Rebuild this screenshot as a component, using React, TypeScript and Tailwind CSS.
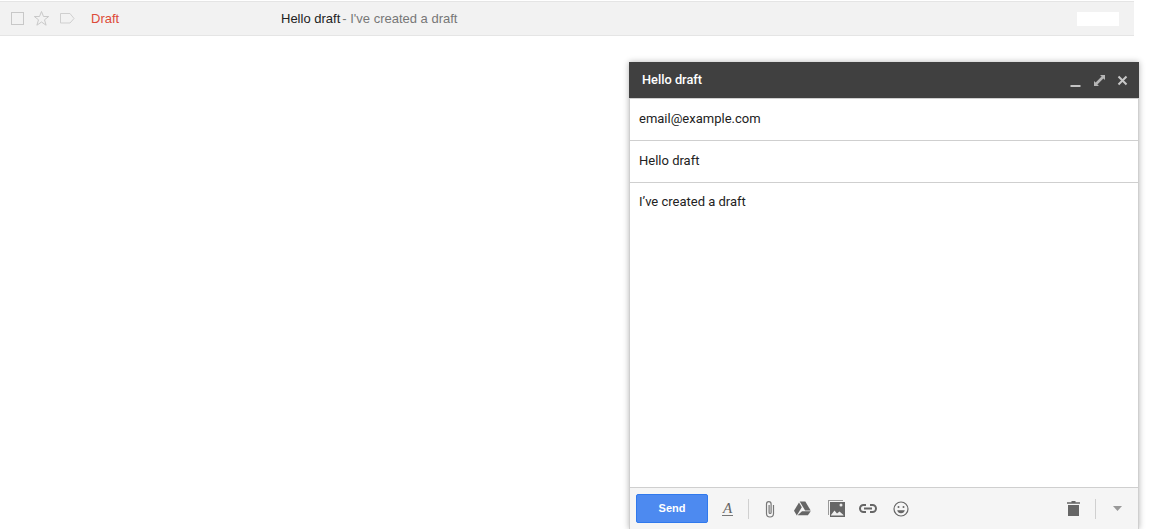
import React from 'react';

function App() {
  return (
    <div className="h-[529px] w-[1160px] overflow-hidden bg-white font-['Liberation_Sans',Arimo,sans-serif] text-[13px] text-[#222]">
      {/* Draft row */}
      <div className="mt-px flex h-[35px] w-[1134px] items-center border-y border-[#e5e5e5] bg-[#f2f2f2]">
        <div className="ml-[11px] h-[13px] w-[13px] border border-[#c8c8c8]" />
        <svg className="ml-[9px]" width="17" height="17" viewBox="0 0 17 17" fill="none" stroke="#c9c9c9" strokeWidth="1">
          <path d="M8.5 1.5l2 5h5.2l-4.2 3.3 1.6 5.4-4.6-3.2-4.6 3.2 1.6-5.4-4.2-3.3h5.2z" />
        </svg>
        <svg className="ml-[10px]" width="15" height="11" viewBox="0 0 15 11" fill="none" stroke="#cfcfcf" strokeWidth="1">
          <path d="M.5.5h9.5l4 5-4 4.5H.5z" />
        </svg>
        <span className="ml-[16px] w-[190px] text-[#dd4b39]">Draft</span>
        <span className="text-[#222]">Hello draft</span>
        <span className="ml-[2px] text-[#777]">- I've created a draft</span>
        <div className="ml-[620px] h-[14px] w-[42px] bg-white" />
      </div>

      {/* Compose window */}
      <div className="ml-[629px] mt-[26px] flex h-[467px] w-[510px] flex-col bg-white shadow-[0_0_6px_rgba(0,0,0,0.3)]">
        <div className="flex h-[36px] shrink-0 items-center bg-[#404040] pl-[13px] pr-[11px] text-white">
          <span className="flex-1 font-['Roboto',sans-serif] text-[12.8px] font-medium">Hello draft</span>
          <svg width="11" height="12" viewBox="0 0 11 12" fill="#c4c4c4" className="mt-[3px]">
            <rect x="0.5" y="9" width="10" height="2" />
          </svg>
          <svg width="11" height="11" viewBox="0 0 11 11" fill="#b5b5b5" className="ml-[13px]">
            <path d="M6 0h5v5L9.4 3.4 3.4 9.4 5 11H0V6l1.6 1.6 6-6z" />
          </svg>
          <svg width="11" height="11" viewBox="0 0 11 11" stroke="#c8c8c8" strokeWidth="2" className="ml-[12px]">
            <path d="M1.5 1.5l8 8M9.5 1.5l-8 8" />
          </svg>
        </div>
        <div className="flex min-h-0 flex-1 flex-col border-x border-[#cfcfcf] font-['Roboto',sans-serif] text-[13px] text-[#222]">
          <div className="flex h-[43px] shrink-0 items-center border-y border-[#cfcfcf] pb-[2px] pl-[9px]">email@example.com</div>
          <div className="flex h-[42px] shrink-0 items-center border-b border-[#cfcfcf] pb-[2px] pl-[9px]">Hello draft</div>
          <div className="flex-1 pl-[9px] pt-[9px]">I’ve created a draft</div>
          <div className="flex h-[42px] shrink-0 items-center border-t border-[#cfcfcf] bg-[#f5f5f5] pl-[6px]">
            <button className="h-[29px] w-[72px] rounded-[2px] border border-[#3079ed] bg-[#4d8af0] text-center font-['Liberation_Sans',sans-serif] text-[11px] font-bold text-white">
              Send
            </button>
            <svg width="14" height="16" viewBox="0 0 14 16" className="ml-[13px]">
              <text x="2" y="12" fontFamily="Liberation Serif" fontStyle="italic" fontSize="15" fill="#666">A</text>
              <rect x="1" y="14" width="11" height="1" fill="#777" />
            </svg>
            <div className="ml-[13px] h-[20px] w-px bg-[#d0d0d0]" />
            <svg width="14" height="18" viewBox="0 0 14 18" fill="none" stroke="#777" strokeWidth="1.2" className="ml-[14px]">
              <path d="M10.5 5v8.5a3.5 3.5 0 0 1-7 0V4a2.3 2.3 0 0 1 4.6 0v8.5a1 1 0 0 1-2 0V5" />
            </svg>
            <svg width="17" height="15" viewBox="0 0 17 15" fill="#666" className="ml-[17px]">
              <path d="M5.7 0.5h5.6l5.4 9h-5.6z" />
              <path d="M5 1.5l2.8 4.7-5 8.3L0 9.8z" />
              <path d="M8 10.5h8.7l-2.8 4H3.5z" transform="translate(0 -.2)" />
            </svg>
            <svg width="17" height="17" viewBox="0 0 17 17" className="ml-[17px]">
              <path d="M0 0h15v1H1v14H0z" fill="#999" />
              <rect x="2" y="2" width="15" height="15" fill="#666" />
              <circle cx="13" cy="5" r="1.5" fill="#e8e8e8" />
              <path d="M3 15l3.5-4.5 2.5 3 2.5-2 4 3.5v.5H3z" fill="#f0f0f0" />
            </svg>
            <svg width="18" height="10" viewBox="0 0 18 10" fill="none" stroke="#666" strokeWidth="2" className="ml-[14px]">
              <path d="M7 1H4.5a3.5 3.5 0 0 0 0 7H7M11 1h2.5a3.5 3.5 0 0 1 0 7H11M5 4.5h8" />
            </svg>
            <svg width="16" height="16" viewBox="0 0 16 16" fill="none" stroke="#666" strokeWidth="1.2" className="ml-[16px]">
              <circle cx="8" cy="8" r="7" />
              <circle cx="5.5" cy="6" r="1" fill="#666" stroke="none" />
              <circle cx="10.5" cy="6" r="1" fill="#666" stroke="none" />
              <path d="M4.2 9.3h7.6a3.9 3.9 0 0 1-7.6 0z" fill="#666" stroke="none" />
            </svg>
            <div className="flex-1" />
            <svg width="13" height="15" viewBox="0 0 13 15" fill="#666" className="mr-[15px]">
              <path d="M4.5 0h4v1.2H13v1.6H0V1.2h4.5zM1 4h11v11H1z" />
            </svg>
            <div className="h-[20px] w-px bg-[#d0d0d0]" />
            <svg width="9" height="5" viewBox="0 0 9 5" fill="#999" className="ml-[17px] mr-[16px]">
              <path d="M0 0h9L4.5 5z" />
            </svg>
          </div>
        </div>
      </div>
    </div>
  );
}

export default App;
